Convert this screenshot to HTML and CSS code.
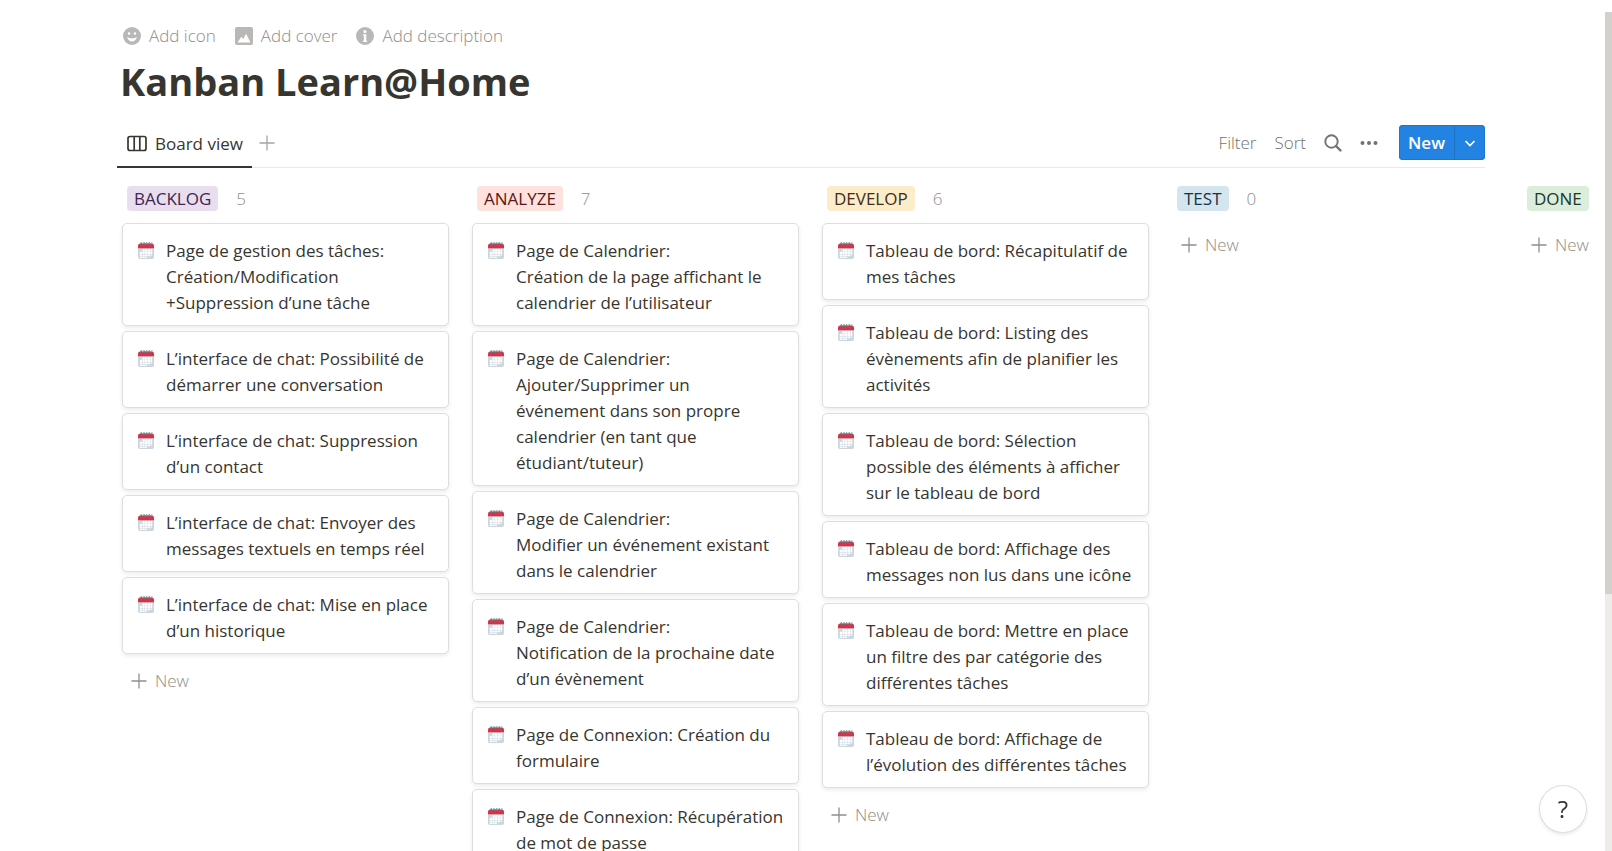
FILE: index.html
```html
<!DOCTYPE html>
<html lang="fr">
<head>
<meta charset="utf-8">
<title>Kanban Learn@Home</title>
<link rel="stylesheet" href="styles.css">
</head>
<body>
<svg class="defs" aria-hidden="true">
  <symbol id="cal" viewBox="0 0 36 38">
    <path fill="#ccd6dd" d="M0 13h36v21a4 4 0 0 1-4 4H4a4 4 0 0 1-4-4z"/>
    <path fill="#dd2e44" d="M4 4h28a4 4 0 0 1 4 4v6H0V8a4 4 0 0 1 4-4z"/>
    <path fill="#fff" d="M10 16h5v5h-5zM16 16h5v5h-5zM22 16h5v5h-5zM28 16h4v5h-4zM4 22h5v5H4zM10 22h5v5h-5zM16 22h5v5h-5zM22 22h5v5h-5zM28 22h4v5h-4zM4 28h5v4H4zM10 28h5v4h-5zM16 28h5v4h-5zM22 28h5v4h-5zM28 28h4v2h-4zM4 33h5v3H4zM10 33h5v3h-5zM16 33h4v3h-4z"/>
    <path fill="none" stroke="#66757f" stroke-width="2" stroke-linecap="round" d="M5 7c-2-3 0-6 3-5M11 7c-2-3 0-6 3-5M17 7c-2-3 0-6 3-5M23 7c-2-3 0-6 3-5M29 7c-2-3 0-6 3-5M8 2l1 5M14 2l1 5M20 2l1 5M26 2l1 5"/>
  </symbol>
  <symbol id="plus" viewBox="0 0 16 16">
    <path fill="none" stroke="currentColor" stroke-width="1.3" d="M8 0.5v15M0.5 8h15"/>
  </symbol>
</svg>

<header class="page-head">
  <div class="page-actions">
    <button class="ghost" type="button">
      <svg class="icon-18" viewBox="0 0 14 14"><path fill="currentColor" fill-rule="evenodd" d="M7 0a7 7 0 1 1 0 14A7 7 0 0 1 7 0zM4.700 4a1 1 0 1 0 0 2 1 1 0 0 0 0-2zm4.600 0a1 1 0 1 0 0 2 1 1 0 0 0 0-2zM3.200 7.700C3.700 9.900 5.200 11.200 7 11.200s3.300-1.300 3.800-3.500c-1 .7-2.300 1.100-3.800 1.100s-2.800-.4-3.800-1.100z"/></svg>
      Add icon
    </button>
    <button class="ghost" type="button">
      <svg class="icon-18" viewBox="0 0 14 14"><path fill="currentColor" fill-rule="evenodd" d="M1.500 0h11A1.500 1.500 0 0 1 14 1.500v11a1.500 1.500 0 0 1-1.500 1.500h-11A1.500 1.500 0 0 1 0 12.500v-11A1.500 1.500 0 0 1 1.500 0zM2 12h10L8.600 5.300 6.400 9.300 4.900 7.600z"/></svg>
      Add cover
    </button>
    <button class="ghost" type="button">
      <svg class="icon-18" viewBox="0 0 14 14"><path fill="currentColor" fill-rule="evenodd" d="M7 0a7 7 0 1 1 0 14A7 7 0 0 1 7 0zM7 2.300a1.200 1.200 0 1 0 0 2.400 1.200 1.200 0 0 0 0-2.400zM5.500 5.600v1.200h.6v3.800h-.6v1.100h3v-1.100H8V5.600z"/></svg>
      Add description
    </button>
  </div>
  <h1 class="title">Kanban Learn@Home</h1>
  <div class="toolbar">
    <button class="tab" type="button">
      <svg class="icon-20" viewBox="0 0 20 20"><path fill="none" stroke="currentColor" stroke-width="1.700" d="M3 2.500h14a2 2 0 0 1 2 2v10a2 2 0 0 1-2 2H3a2 2 0 0 1-2-2v-10a2 2 0 0 1 2-2zM7.200 2.500v14M12.800 2.500v14"/></svg>
      Board view
    </button>
    <button class="add-view" type="button" aria-label="Add a view"><svg class="icon-16"><use href="#plus"/></svg></button>
    <div class="tools">
      <button class="tool" type="button">Filter</button>
      <button class="tool" type="button">Sort</button>
      <button class="tool" type="button" aria-label="Search"><svg class="icon-18" viewBox="0 0 18 18"><circle cx="7.500" cy="7.500" r="6.200" fill="none" stroke="currentColor" stroke-width="1.900"/><path stroke="currentColor" stroke-width="2.400" stroke-linecap="round" d="M12 12l4.500 4.500"/></svg></button>
      <button class="tool" type="button" aria-label="More"><svg class="icon-18" viewBox="0 0 18 18"><g fill="currentColor"><circle cx="2.500" cy="9" r="2"/><circle cx="9" cy="9" r="2"/><circle cx="15.500" cy="9" r="2"/></g></svg></button>
      <div class="new-group">
        <button class="new-main" type="button">New</button>
        <button class="new-more" type="button" aria-label="Templates"><svg class="icon-12" viewBox="0 0 12 12"><path fill="none" stroke="currentColor" stroke-width="1.700" d="M1.500 4L6 8.500 10.500 4"/></svg></button>
      </div>
    </div>
  </div>
</header>

<main class="board">
  <section class="column">
    <h2 class="col-head"><span class="tag purple">BACKLOG</span><span class="count">5</span></h2>
    <article class="card"><svg class="emoji"><use href="#cal"/></svg><p>Page de gestion des tâches: Création/Modification +Suppression d’une tâche</p></article>
    <article class="card"><svg class="emoji"><use href="#cal"/></svg><p>L’interface de chat: Possibilité de démarrer une conversation</p></article>
    <article class="card"><svg class="emoji"><use href="#cal"/></svg><p>L’interface de chat: Suppression d’un contact</p></article>
    <article class="card"><svg class="emoji"><use href="#cal"/></svg><p>L’interface de chat: Envoyer des messages textuels en temps réel</p></article>
    <article class="card"><svg class="emoji"><use href="#cal"/></svg><p>L’interface de chat: Mise en place d’un historique</p></article>
    <button class="add-card" type="button"><svg class="icon-16"><use href="#plus"/></svg>New</button>
  </section>

  <section class="column">
    <h2 class="col-head"><span class="tag red">ANALYZE</span><span class="count">7</span></h2>
    <article class="card"><svg class="emoji"><use href="#cal"/></svg><p>Page de Calendrier:<br>Création de la page affichant le calendrier de l’utilisateur</p></article>
    <article class="card"><svg class="emoji"><use href="#cal"/></svg><p>Page de Calendrier:<br>Ajouter/Supprimer un<br>événement dans son propre calendrier (en tant que étudiant/tuteur)</p></article>
    <article class="card"><svg class="emoji"><use href="#cal"/></svg><p>Page de Calendrier:<br>Modifier un événement existant dans le calendrier</p></article>
    <article class="card"><svg class="emoji"><use href="#cal"/></svg><p>Page de Calendrier:<br>Notification de la prochaine date d’un évènement</p></article>
    <article class="card"><svg class="emoji"><use href="#cal"/></svg><p>Page de Connexion: Création du formulaire</p></article>
    <article class="card"><svg class="emoji"><use href="#cal"/></svg><p>Page de Connexion: Récupération de mot de passe</p></article>
  </section>

  <section class="column">
    <h2 class="col-head"><span class="tag yellow">DEVELOP</span><span class="count">6</span></h2>
    <article class="card"><svg class="emoji"><use href="#cal"/></svg><p>Tableau de bord: Récapitulatif de mes tâches</p></article>
    <article class="card"><svg class="emoji"><use href="#cal"/></svg><p>Tableau de bord: Listing des évènements afin de planifier les activités</p></article>
    <article class="card"><svg class="emoji"><use href="#cal"/></svg><p>Tableau de bord: Sélection possible des éléments à afficher sur le tableau de bord</p></article>
    <article class="card"><svg class="emoji"><use href="#cal"/></svg><p>Tableau de bord: Affichage des messages non lus dans une icône</p></article>
    <article class="card"><svg class="emoji"><use href="#cal"/></svg><p>Tableau de bord: Mettre en place un filtre des par catégorie des différentes tâches</p></article>
    <article class="card"><svg class="emoji"><use href="#cal"/></svg><p>Tableau de bord: Affichage de l’évolution des différentes tâches</p></article>
    <button class="add-card" type="button"><svg class="icon-16"><use href="#plus"/></svg>New</button>
  </section>

  <section class="column">
    <h2 class="col-head"><span class="tag blue">TEST</span><span class="count">0</span></h2>
    <button class="add-card" type="button"><svg class="icon-16"><use href="#plus"/></svg>New</button>
  </section>

  <section class="column">
    <h2 class="col-head"><span class="tag green">DONE</span></h2>
    <button class="add-card" type="button"><svg class="icon-16"><use href="#plus"/></svg>New</button>
  </section>
</main>

<div class="scrollbar"><div class="thumb"></div></div>
<button class="help" type="button" aria-label="Help">?</button>
</body>
</html>
```

FILE: styles.css
```css
* { box-sizing: border-box; }

body {
  margin: 0;
  height: 100vh;
  overflow: hidden;
  background: #fff;
  color: #37352f;
  font-family: "Open Sans", "Noto Sans", sans-serif;
  font-size: 17px;
  line-height: 26px;
}

button {
  display: flex;
  align-items: center;
  margin: 0;
  padding: 0;
  border: 0;
  background: none;
  color: inherit;
  font: inherit;
  white-space: nowrap;
  cursor: pointer;
}

svg { flex: none; display: block; }

.defs { position: absolute; width: 0; height: 0; }
.icon-12 { width: 12px; height: 12px; }
.icon-16 { width: 16px; height: 16px; }
.icon-18 { width: 18px; height: 18px; }
.icon-20 { width: 20px; height: 20px; }

.page-head { margin: 0 127px 0 117px; padding-top: 23px; }

.page-actions { display: flex; gap: 19px; padding-left: 6px; }

.ghost { gap: 8px; color: #8f8e8b; font-weight: 300; }
.ghost svg { color: #b9b8b6; }

.title {
  margin: 4px 0 0;
  padding-left: 3px;
  font-size: 38px;
  line-height: 56px;
  font-weight: 700;
}

.toolbar {
  display: flex;
  align-items: stretch;
  height: 50px;
  margin-top: 9px;
  border-bottom: 1px solid #e9e9e7;
}

.tab {
  gap: 8px;
  padding: 3px 9px 0 10px;
  margin-bottom: -1px;
  border-bottom: 2px solid #37352f;
  font-weight: 500;
}

.add-view { padding: 0 7px; color: #a5a4a1; }

.tools {
  display: flex;
  align-items: center;
  gap: 18px;
  margin-left: auto;
}

.tool { color: #73726e; font-weight: 300; }

.new-group {
  display: flex;
  height: 35px;
  margin-left: 3px;
  border-radius: 4px;
  background: #2383e2;
  box-shadow: inset 0 0 0 1px #1f76cb;
  color: #fff;
}

.new-main { padding: 0 9px; font-weight: 600; }
.new-more { padding: 0 9px; border-left: 1px solid #1f73c7; }

.board {
  display: grid;
  grid-template-columns: repeat(5, 327px);
  gap: 23px;
  align-items: start;
  margin-right: 7px;
  padding: 18px 0 0 122px;
  overflow: hidden;
}

.column { display: flex; flex-direction: column; gap: 5px; }

.col-head {
  display: flex;
  align-items: center;
  gap: 18px;
  margin: 0 0 7px;
  padding-left: 5px;
  font-size: 17px;
  line-height: 25px;
  font-weight: 500;
}

.tag { padding: 0 7px; border-radius: 4px; }
.purple { background: #e8deee; color: #412454; }
.red { background: #ffe2dd; color: #5d1715; }
.yellow { background: #fdecc8; color: #402c1b; }
.blue { background: #d3e5ef; color: #183347; }
.green { background: #dbeddb; color: #1c3829; }
.count { color: #8f8e8b; font-weight: 300; }

.card {
  display: flex;
  align-items: flex-start;
  gap: 12px;
  padding: 14px 12px 9px 15px;
  border: 1px solid #dededd;
  border-radius: 5px;
  background: #fff;
  box-shadow: 0 2px 4px rgba(15, 15, 15, 0.08);
  font-weight: 500;
}

.card p { margin: 0; }
.emoji { width: 16px; height: 17px; margin-top: 4px; }

.add-card {
  gap: 8px;
  height: 35px;
  margin-top: 4px;
  padding: 0 9px;
  color: #8f8e8b;
  font-weight: 300;
}

.scrollbar {
  position: fixed;
  top: 12px;
  right: 0;
  bottom: 0;
  width: 7px;
  background: #edece9;
}

.thumb { height: 69.4%; background: #d3d1cb; }

.help {
  position: fixed;
  right: 26px;
  bottom: 19px;
  justify-content: center;
  width: 46px;
  height: 46px;
  border-radius: 50%;
  background: #fff;
  box-shadow: 0 0 0 1px #dededd, 0 2px 4px rgba(15, 15, 15, 0.12);
  font-size: 24px;
}
```
